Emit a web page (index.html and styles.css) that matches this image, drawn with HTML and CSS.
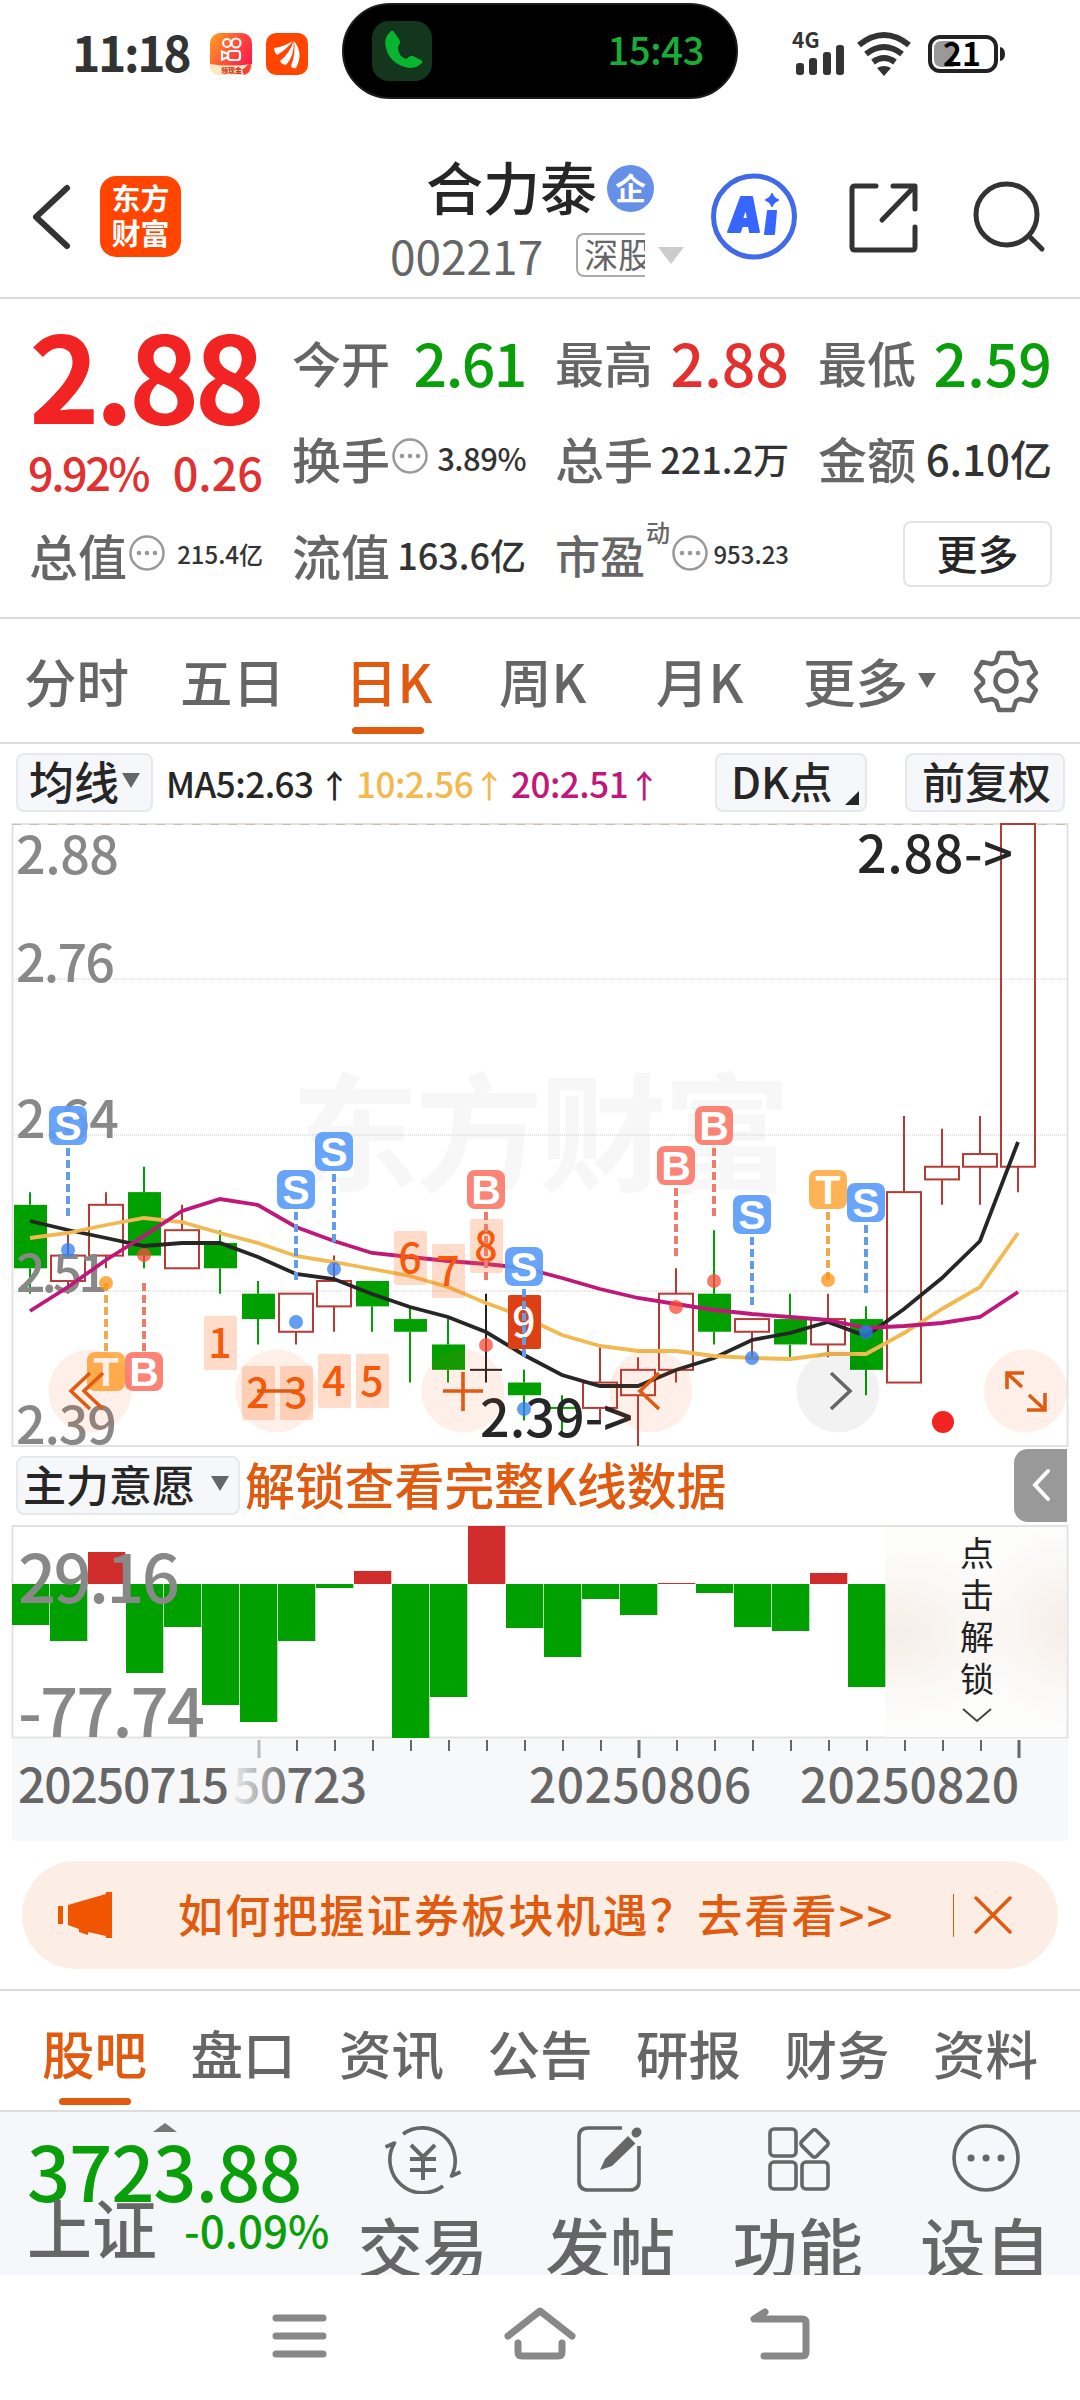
FILE: index.html
```html
<!DOCTYPE html>
<html lang="zh-CN">
<head>
  <meta charset="UTF-8" />
  <title>合力泰 002217</title>
  <link rel="stylesheet" href="styles.css">
</head>
<body>

<div class="status-bar">
  <span class="clock">11:18</span>
  <svg class="app-icon" viewBox="0 0 42 42">
    <defs>
      <linearGradient id="ks" x1="0" y1="0" x2="1" y2="0.6">
        <stop offset="0" stop-color="#ffa21f"/><stop offset="0.6" stop-color="#ff4a3a"/><stop offset="1" stop-color="#fb1f4a"/>
      </linearGradient>
    </defs>
    <rect width="42" height="42" rx="10" fill="url(#ks)"/>
    <g fill="none" stroke="#fff" stroke-width="2.2">
      <circle cx="17" cy="10" r="4"/><circle cx="26" cy="10" r="4.5"/>
      <rect x="18" y="18" width="12" height="9" rx="2.5"/>
      <path d="M12 18.500v8l6-2.500v-3z"/>
    </g>
    <path d="M0 31q20 3 42 0v1q0 10-10 10H10Q0 42 0 32z" fill="#ffe9c4"/>
    <text x="11" y="40" class="ks-text">领现金</text>
    <path d="M40 30l-8 7 2 5q7-2 7-10z" fill="#f5413c"/>
  </svg>
  <svg class="app-icon second" viewBox="0 0 42 42">
    <rect width="42" height="42" rx="10" fill="#ff4500"/>
    <path d="M8 15q9-1 19-7-7 9-16 14-3-3-3-7zM14 28Q24 20 27.500 8 29 22 20 32q-5-1-6-4zM25 33q5-13 3-25 10 12 2 27-4 1-5-2z" fill="#fff"/>
  </svg>
  <div class="island">
    <svg class="call-icon" viewBox="0 0 60 60">
      <rect width="60" height="60" rx="17" fill="#14361d"/>
      <path d="M19 10q-8 7-5 17 4 15 19 19 10 3 17-4 1-2-1-3l-8-4q-2-1-4 1l-3 2q-8-3-8-12l2-4q0-2-1-4l-5-7q-1-2-3-1z" fill="#08b52f"/>
    </svg>
    <span class="call-time">15:43</span>
  </div>
  <svg class="signal" viewBox="790 30 70 48">
    <text x="792" y="48" class="net-text">4G</text>
    <g fill="#333">
      <rect x="796" y="63" width="8" height="12" rx="3"/>
      <rect x="809" y="58" width="8" height="17" rx="3"/>
      <rect x="823" y="52" width="8" height="23" rx="3"/>
      <rect x="836" y="45" width="8" height="30" rx="3"/>
    </g>
  </svg>
  <svg class="wifi" viewBox="856 30 56 48">
    <g fill="none" stroke="#333" stroke-width="6">
      <path d="M859 45q25-20 50 0"/><path d="M866 54q18-14 36 0"/><path d="M873 62q11-8 22 0"/>
    </g>
    <path d="M877 68q7-4 14 0l-7 8z" fill="#333"/>
  </svg>
  <svg class="battery" viewBox="926 33 82 42">
    <rect x="930" y="37" width="66" height="34" rx="10" fill="#fff" stroke="#222" stroke-width="4"/>
    <path d="M942 41h12v26h-12q-8 0-8-8V49q0-8 8-8z" fill="#999"/>
    <path d="M1000 47q5 1 5 7t-5 7z" fill="#222"/>
    <text x="943" y="66" class="bat-text">21</text>
  </svg>
</div>

<div class="title-bar">
  <svg class="back" viewBox="0 0 44 70"><path d="M38 6L7 35l31 29" fill="none" stroke="#333" stroke-width="6" stroke-linecap="round" stroke-linejoin="round"/></svg>
  <div class="logo">东方<br>财富</div>
  <div class="stock">
    <div class="stock-name">合力泰<span class="badge">企</span></div>
    <div class="stock-code">002217<span class="market">深股</span><i class="caret"></i></div>
  </div>
  <svg class="ai" viewBox="711 174 87 87">
    <circle cx="754" cy="217.500" r="40.500" fill="none" stroke="#4169e8" stroke-width="5"/>
    <g fill="#3766ff" stroke="#3766ff" stroke-width="2" stroke-linejoin="round">
      <path d="M741 198h11l7 35h-9l-1-6h-7l-2 6h-12zM746 208l-4 12h6z" fill-rule="evenodd"/>
      <path d="M768 212h8l-2 23h-9zM772 195q2 5 6 6-5 2-6 6-2-5-6-6 5-2 6-6z"/>
    </g>
  </svg>
  <svg class="share" viewBox="847 180 74 74">
    <path d="M876 186h-21q-3 0-3 3v58q0 3 3 3h57q3 0 3-3v-20M893 186h22v23M914 187l-32 33" fill="none" stroke="#333" stroke-width="5" stroke-linecap="round" stroke-linejoin="round"/>
  </svg>
  <svg class="search" viewBox="972 180 74 74">
    <circle cx="1006.500" cy="214.500" r="30.500" fill="none" stroke="#333" stroke-width="5"/>
    <path d="M1029 236l13 13" stroke="#333" stroke-width="5" stroke-linecap="round"/>
  </svg>
</div>

<div class="quote">
  <div class="price-cell">
    <div class="price">2.88</div>
    <div class="change"><span class="pct">9.92%</span><span>0.26</span></div>
  </div>
  <div class="cell"><span>今开</span><b class="big green tight">2.61</b></div>
  <div class="cell"><span>最高</span><b class="big red">2.88</b></div>
  <div class="cell"><span>最低</span><b class="big green">2.59</b></div>
  <div class="cell"><span>换手</span><svg class="dots" viewBox="0 0 36 36"><use href="#more"/></svg><b class="s31">3.89%</b></div>
  <div class="cell"><span>总手</span><b class="s36">221.2万</b></div>
  <div class="cell"><span>金额</span><b class="s42">6.10亿</b></div>
  <div class="cell"><span>总值</span><svg class="dots" viewBox="0 0 36 36"><use href="#more"/></svg><b class="s24">215.4亿</b></div>
  <div class="cell"><span>流值</span><b class="s36">163.6亿</b></div>
  <div class="cell"><span class="narrow">市盈</span><sup>动</sup><svg class="dots" viewBox="0 0 36 36"><use href="#more"/></svg><b class="s24">953.23</b></div>
  <div class="cell last"><div class="more-btn">更多</div></div>
</div>

<div class="tabs">
  <span>分时</span>
  <span>五日</span>
  <span class="active">日K</span>
  <span>周K</span>
  <span>月K</span>
  <span class="tab-more">更多<i class="caret dark"></i></span>
  <svg class="gear" viewBox="0 0 64 64">
    <path d="M25 4h14l3 9 4 2 10-2 6 11-7 7v3l7 7-6 11-10-2-4 2-3 9H25l-3-9-4-2-10 2-6-11 7-7v-3l-7-7L8 13l10 2 4-2z" fill="none" stroke="#666" stroke-width="4.500" stroke-linejoin="round"/>
    <circle cx="32" cy="32" r="10.500" fill="none" stroke="#666" stroke-width="4.500"/>
  </svg>
</div>

<div class="ma-bar">
  <div class="chip ma-chip">均线<i class="caret dark"></i></div>
  <span class="ma ma5">MA5:2.63<i>↑</i></span>
  <span class="ma ma10">10:2.56<i>↑</i></span>
  <span class="ma ma20">20:2.51<i>↑</i></span>
  <div class="chip dk-chip">DK点<i class="corner"></i></div>
  <div class="chip fq-chip">前复权</div>
</div>

<svg id="kline" viewBox="0 822 1080 625"></svg>

<div class="intent-bar">
  <div class="chip intent-chip">主力意愿<i class="caret dark"></i></div>
  <span class="unlock">解锁查看完整K线数据</span>
  <div class="drawer"><svg viewBox="0 0 24 36"><path d="M19 4L6 18l13 14" fill="none" stroke="#fff" stroke-width="4" stroke-linecap="round"/></svg></div>
</div>

<svg id="intent" viewBox="0 1523 1080 317"></svg>

<div class="banner">
  <svg class="horn" viewBox="0 0 56 46"><path d="M0 14h5v18H0zM10 13L48 2V0h6v46h-6v-2l-18-4v3l-9-3v-3l-11-4z" fill="#f05500"/></svg>
  <span class="banner-text">如何把握证券板块机遇？去看看&gt;&gt;</span>
  <i class="bar"></i>
  <svg class="close" viewBox="0 0 40 38"><path d="M3 2l34 34M37 2L3 36" stroke="#e05a10" stroke-width="3.500" stroke-linecap="round"/></svg>
</div>

<div class="sections">
  <span class="active">股吧</span><span>盘口</span><span>资讯</span><span>公告</span><span>研报</span><span>财务</span><span>资料</span>
</div>

<div class="bottom-bar">
  <div class="index">
    <i class="up"></i>
    <div class="index-value">3723.88</div>
    <div class="index-row"><span>上证</span><b>-0.09%</b></div>
  </div>
  <div class="action">
    <svg viewBox="0 0 80 70">
      <path d="M20 10A33 33 0 0 1 68.500 52l9-4M60 62A33 33 0 0 1 11.500 19l-9 4"/>
      <path d="M28 21l12 12 12-12M27 35h26M27 46h26M40 33v23" stroke-width="4"/>
    </svg>
    <span>交易</span>
  </div>
  <div class="action">
    <svg viewBox="0 0 80 70">
      <path d="M52 4H18q-9 0-9 9v44q0 9 9 9h42q9 0 9-9V22"/>
      <path d="M30 46l5-11 24-24 8 7-25 24z" fill="#666" stroke="none"/>
      <path d="M66 9l1-1" stroke-width="9" stroke-linecap="round"/>
      <path d="M57 9l10 10" stroke="#f6f7fa" stroke-width="3"/>
    </svg>
    <span>发帖</span>
  </div>
  <div class="action">
    <svg viewBox="0 0 80 70">
      <rect x="12" y="5" width="26" height="27" rx="4"/>
      <rect x="12" y="38" width="26" height="27" rx="4"/>
      <rect x="44" y="38" width="26" height="27" rx="4"/>
      <rect x="46" y="9" width="21" height="21" rx="3" transform="rotate(45 56.500 19.500)"/>
    </svg>
    <span>功能</span>
  </div>
  <div class="action">
    <svg viewBox="0 0 80 70">
      <circle cx="41" cy="34" r="32"/>
      <path d="M26 34h.1M41 34h.1M56 34h.1" stroke-width="7" stroke-linecap="round"/>
    </svg>
    <span>设自</span>
  </div>
</div>

<div class="nav-bar">
  <svg viewBox="0 0 80 60"><path d="M16 15h47M16 33h47M16 51h47"/></svg>
  <svg viewBox="0 0 80 60"><path d="M8 33L40 8l32 25M18 40v9q0 4 4 4h36q4 0 4-4v-9"/></svg>
  <svg viewBox="0 0 80 60"><path d="M25 9L14 16h48q4 0 4 4v29q0 4-4 4H24"/></svg>
</div>

<svg class="defs">
  <g id="more">
    <circle cx="18" cy="18" r="16.500" fill="none" stroke="#999" stroke-width="2.500"/>
    <circle cx="10" cy="18" r="2.300" fill="#999"/><circle cx="18" cy="18" r="2.300" fill="#999"/><circle cx="26" cy="18" r="2.300" fill="#999"/>
  </g>
</svg>

<script>
  const STEP = 38;
  const FIRST = 30;
  const cx = i => FIRST + i * STEP;
  // prices are kept in cents, 288 sits on the top edge
  const py = p => 823 + (288 - p) * 12.694;

  // [color, high, body top, body bottom, low]
  const candles = [
    ["g", 259, 258, 253, 251], ["r", 256, 254, 252, 251], ["r", 259, 258, 254, 253],
    ["g", 261, 259, 254, 253], ["r", 258, 256, 253, 253], ["g", 256, 255, 253, 251],
    ["g", 252, 251, 249, 247], ["r", 251, 251, 248, 247], ["r", 254, 252, 250, 248],
    ["g", 252, 252, 250, 248], ["g", 250, 249, 248, 244], ["g", 249, 247, 245, 244],
    ["k", 251, 245, 245, 244], ["g", 245, 244, 243, 241], ["g", 243, 242, 242, 240],
    ["r", 247, 244, 242, 241], ["r", 246, 245, 243, 239], ["r", 253, 251, 245, 244],
    ["g", 256, 251, 248, 247], ["r", 249, 249, 248, 246], ["g", 251, 249, 247, 246],
    ["r", 251, 249, 247, 246], ["g", 250, 249, 245, 243], ["r", 265, 259, 244, 244],
    ["r", 264, 261, 260, 258], ["r", 265, 262, 261, 258], ["r", 288, 288, 261, 259]
  ];
  const colors = { r: "#b83a35", g: "#00a000", k: "#222" };

  const ma5 = [1220,1229,1237,1245,1242,1242,1256,1273,1278,1293,1306,1316,1331,1354,1374,1385,1385,1369,1357,1339,1332,1321,1335,1308,1277,1240,1141];
  const ma10 = [1237,1232,1224,1217,1221,1232,1242,1255,1261,1268,1275,1286,1302,1316,1334,1345,1350,1350,1355,1357,1358,1353,1353,1332,1308,1286,1232];
  const ma20 = [1310,1286,1259,1235,1210,1198,1204,1226,1240,1252,1256,1260,1263,1267,1277,1288,1297,1303,1309,1313,1316,1319,1327,1325,1322,1316,1291];

  // [candle, letter, badge center, dot center, badge below]
  const marks = [
    [1, "S", 1125, 1249], [7, "S", 1189, 1321], [8, "S", 1151, 1268], [12, "B", 1189, 1344],
    [13, "S", 1266, 1408], [17, "B", 1165, 1306], [18, "B", 1125, 1280], [19, "S", 1214, 1357],
    [21, "T", 1189, 1279], [22, "S", 1202, 1331], [2, "T", 1371, 1282, true], [3, "B", 1371, 1254, true]
  ];
  const markColor = { S: "#5b9dfa", B: "#fb7a6a", T: "#ffad45" };
  const dashColor = { S: "#629ee8", B: "#ec7c6c", T: "#f0a94c" };
  const dotColor = { S: "rgba(45,125,240,.75)", B: "rgba(250,75,55,.75)", T: "rgba(255,150,25,.78)" };

  // [candle, top]
  const counts = [[5, 1315], [6, 1365], [7, 1365], [8, 1353], [9, 1353], [10, 1230], [11, 1243], [12, 1218], [13, 1294]];

  function line(x1, y1, x2, y2, color, w, extra) {
    return `<line x1="${x1}" y1="${y1}" x2="${x2}" y2="${y2}" stroke="${color}" stroke-width="${w}" ${extra || ""}/>`;
  }

  function label(x, y, text, width, cls) {
    return `<text x="${x}" y="${y}" textLength="${width}" class="${cls}">${text}</text>`;
  }

  function poly(data, color) {
    const pts = data.map((y, i) => cx(i) + "," + y).join(" ");
    return `<polyline points="${pts}" fill="none" stroke="${color}" stroke-width="3.8"/>`;
  }

  function drawKline() {
    let s = `<text x="291" y="1181" textLength="500" class="watermark">东方财富</text>`;
    [978, 1134, 1290].forEach(y => s += line(12, y, 1067, y, "#ccc", 1, 'stroke-dasharray="1 1"'));
    s += `<rect x="12.500" y="823" width="1055" height="622" fill="none" stroke="#e2e2e2" stroke-width="2"/>`;
    s += line(12, 823.5, 1067, 823.5, "#d0bca0", 1, 'stroke-dasharray="9 9"');

    candles.forEach(([c, hi, top, bot, lo], i) => {
      const x = cx(i), col = colors[c];
      if (hi > top) s += line(x, py(hi), x, py(top), col, 2);
      if (lo < bot) s += line(x, py(bot), x, py(lo), col, 2);
      if (top === bot) s += line(x - 16, py(top), x + 16, py(top), col, 2);
      else if (c === "g") s += `<rect x="${x - 16}" y="${py(top)}" width="33" height="${py(bot) - py(top)}" fill="${col}"/>`;
      else s += `<rect x="${x - 17}" y="${py(top)}" width="34" height="${py(bot) - py(top)}" fill="none" stroke="${col}" stroke-width="2"/>`;
    });

    s += label(16, 873, "2.88", 103, "scale") + label(16, 981, "2.76", 99, "scale");
    s += label(16, 1137, "2.64", 103, "scale") + label(16, 1291, "2.51", 92, "scale") + label(16, 1443, "2.39", 101, "scale");
    s += poly(ma5, "#262626") + poly(ma10, "#f2b950") + poly(ma20, "#c01878");
    s += label(857, 872, "2.88-&gt;", 156, "peak");
    s += label(480, 1436, "2.39-&gt;", 153, "peak");

    counts.forEach(([i, y], n) => {
      const last = n === 8;
      s += `<rect x="${cx(i) - 16}" y="${y}" width="33" height="54" rx="2" fill="${last ? "#dd4014" : "rgba(255,110,40,.25)"}"/>`;
      s += `<text x="${cx(i)}" y="${y + 42}" class="count${last ? " count-last" : ""}">${n + 1}</text>`;
    });

    marks.forEach(([i, t, y, dot, below]) => {
      const x = cx(i);
      s += below ? line(x, 1282, x, 1350, dashColor[t], 4, 'stroke-dasharray="8 4"')
                 : line(x, y + 22, x, y + 90, dashColor[t], 4, 'stroke-dasharray="8 4"');
      s += `<circle cx="${x}" cy="${dot}" r="7" fill="${dotColor[t]}"/>`;
      s += `<rect x="${x - 19}" y="${y - 20}" width="38" height="39" rx="8" fill="${markColor[t]}" fill-opacity=".92"/>`;
      s += `<text x="${x}" y="${y + 14}" class="mark">${t}</text>`;
    });

    // chart controls
    [90, 276.5, 463, 651, 838, 1025.5].forEach((x, i) => {
      s += `<circle cx="${x}" cy="1390" r="41.500" fill="${i === 4 ? "rgba(0,0,0,.05)" : "rgba(240,90,10,.09)"}"/>`;
    });
    s += `<g fill="none" stroke="#e05a10" stroke-width="3.600">
      <path d="M90 1372l-19 18 19 18M103 1372l-19 18 19 18M257 1390h40M443 1390h40M463 1371v39M659 1372l-19 18 19 18"/>
      <path d="M1007 1388v-16h17M1008 1373l14 13M1027 1409h18v-17M1029 1394l15 14"/>
      <path d="M831 1372l19 18-19 18" stroke="#666"/></g>`;
    s += `<circle cx="943" cy="1421" r="11" fill="#f22323"/>`;
    document.getElementById("kline").innerHTML = s;
  }

  function drawIntent() {
    const base = 1583;
    const ends = [1624,1640,1551,1672,1626,1704,1721,1640,1587,1570,1737,1696,1525,1627,1656,1598,1614,1582,1592,1626,1630,1572,1686];
    let s = `<defs>
      <radialGradient id="lock"><stop offset="0" stop-color="#f6eee8"/><stop offset="1" stop-color="#f6eee8" stop-opacity="0"/></radialGradient>
      <linearGradient id="fade" gradientUnits="userSpaceOnUse" x1="232" y1="0" x2="292" y2="0"><stop offset="0" stop-color="#eee"/><stop offset="1" stop-color="#666"/></linearGradient>
      <clipPath id="lock-area"><rect x="885" y="1526" width="181" height="210"/></clipPath>
    </defs>`;
    s += `<rect x="12" y="1738" width="1056" height="102" fill="#f7f8fa"/>`;
    s += `<rect x="12.500" y="1525" width="1055" height="211.500" fill="#fff" stroke="#e2e2e2" stroke-width="2"/>`;
    // locked area
    s += `<g clip-path="url(#lock-area)"><rect x="885" y="1526" width="181" height="210" fill="#fdfdfc"/>
      <ellipse cx="900" cy="1632" rx="120" ry="90" fill="url(#lock)"/><ellipse cx="1066" cy="1625" rx="100" ry="100" fill="url(#lock)"/></g>`;
    ends.forEach((y, i) => {
      const x = i === 0 ? 12 : cx(i) - 18;
      s += `<rect x="${x}" y="${Math.min(y, base)}" width="37.300" height="${Math.abs(y - base)}" fill="${y < base ? "#d02c2c" : "#00a000"}"/>`;
    });
    s += label(18, 1602, "29.16", 162, "scale big-scale") + label(18, 1736, "-77.74", 187, "scale big-scale");
    "点击解锁".split("").forEach((ch, i) => s += `<text x="977" y="${1565 + i * 42}" class="lock-text">${ch}</text>`);
    s += `<path d="M963 1708l14 12 14-12" fill="none" stroke="#444" stroke-width="2"/>`;
    for (let i = 6; i < 27; i++) {
      const major = i % 10 === 6;
      s += line(cx(i) + 1, 1739, cx(i) + 1, major ? 1757 : 1750, i === 6 ? "#bbb" : "#666", major ? 3 : 2);
    }
    s += label(18, 1802, "20250715", 211, "date") + `<text x="233" y="1802" textLength="134" class="date" style="fill:url(#fade)">50723</text>`;
    s += label(529, 1802, "20250806", 222, "date") + label(800, 1802, "20250820", 219, "date");
    document.getElementById("intent").innerHTML = s;
  }

  drawKline();
  drawIntent();
</script>

</body>
</html>
```
FILE: styles.css
```css
* {
  box-sizing: border-box;
}

body {
  margin: 0;
  width: 1080px;
  height: 2400px;
  overflow: hidden;
  background: #fff;
  color: #262626;
  font-family: "Noto Sans CJK SC", "Noto Sans", sans-serif;
  font-weight: 500;
  line-height: 1;
}

i {
  font-style: normal;
}

svg {
  display: block;
  flex: none;
}

.defs {
  width: 0;
  height: 0;
}

.caret {
  width: 0;
  height: 0;
  border-left: 13px solid transparent;
  border-right: 13px solid transparent;
  border-top: 17px solid #ccc;
}

.caret.dark {
  border-left-width: 9px;
  border-right-width: 9px;
  border-top: 15px solid #666;
}

/* status bar */
.status-bar {
  display: flex;
  align-items: center;
  height: 108px;
  padding-left: 72px;
}

.clock {
  width: 138px;
  margin-top: -7px;
  font-size: 48px;
  font-weight: 700;
  letter-spacing: -2.3px;
  color: #333;
}

.app-icon {
  width: 42px;
  height: 42px;
}

.second {
  margin-left: 14px;
}

.ks-text {
  font-size: 7px;
  font-weight: 900;
  fill: #d8361f;
}

.island {
  display: flex;
  align-items: center;
  justify-content: space-between;
  width: 396px;
  height: 96px;
  margin: -6px 0 0 34px;
  padding: 0 32px 0 28px;
  border-radius: 48px;
  background: #000;
  border: 2px solid #1c1c1c;
}

.call-icon {
  width: 60px;
  height: 60px;
}

.call-time {
  margin-top: -5px;
  font-size: 38px;
  letter-spacing: -0.3px;
  color: #18ad37;
}

.signal {
  width: 70px;
  height: 48px;
  margin-left: 52px;
}

.net-text {
  font-size: 21px;
  font-weight: 700;
  fill: #333;
}

.wifi {
  width: 56px;
  height: 48px;
  margin-left: -4px;
}

.battery {
  width: 82px;
  height: 42px;
  margin-left: 14px;
}

.bat-text {
  font-size: 32px;
  font-weight: 700;
  fill: #000;
}

/* title bar */
.title-bar {
  display: flex;
  align-items: center;
  height: 191px;
  padding: 28px 0 0 29px;
  border-bottom: 2px solid #dcdcdc;
}

.back {
  width: 44px;
  height: 70px;
}

.logo {
  width: 81px;
  height: 81px;
  margin-left: 27px;
  padding-top: 4px;
  border-radius: 16px;
  background: #ff4500;
  color: #fff;
  font-size: 29px;
  font-weight: 700;
  line-height: 35px;
  text-align: center;
}

.stock {
  width: 530px;
  padding-left: 209px;
}

.stock-name {
  display: flex;
  align-items: center;
  height: 56px;
  margin: 0 0 0 36px;
  padding-bottom: 3px;
  font-size: 57px;
}

.badge {
  width: 47px;
  height: 47px;
  margin: 5px 0 0 10px;
  border-radius: 50%;
  background: #6690e8;
  color: #fff;
  font-size: 31px;
  font-weight: 700;
  line-height: 43px;
  text-align: center;
}

.stock-code {
  display: flex;
  align-items: center;
  height: 45px;
  margin-top: 14px;
  padding-top: 7px;
  font-size: 46px;
  font-weight: 400;
  color: #666;
}

.market {
  width: 69px;
  height: 44px;
  margin-left: 33px;
  padding-left: 6px;
  overflow: hidden;
  border: 2px solid #aaa;
  border-right: 0;
  border-radius: 8px 0 0 8px;
  font-size: 34px;
  line-height: 37px;
  white-space: nowrap;
}

.stock-code .caret {
  margin-left: 13px;
}

.ai {
  width: 87px;
  height: 87px;
}

.share {
  width: 74px;
  height: 74px;
  margin-left: 49px;
}

.search {
  width: 74px;
  height: 74px;
  margin-left: 51px;
}

/* quote grid */
.quote {
  display: grid;
  grid-template-columns: repeat(4, 234px);
  grid-template-rows: repeat(3, 96.5px);
  column-gap: 29px;
  height: 320px;
  padding: 14px 0 0 29px;
  border-bottom: 2px solid #dcdcdc;
}

.price-cell {
  grid-row: span 2;
}

.price {
  height: 121px;
  margin-top: -1px;
  font-size: 120px;
  font-weight: 700;
  color: #f22323;
  letter-spacing: -5px;
}

.change {
  display: flex;
  justify-content: space-between;
  margin: 16px 0 0 -1px;
  font-size: 45px;
  color: #e03030;
}

.pct {
  letter-spacing: -2.5px;
}

.cell {
  display: flex;
  align-items: center;
  font-size: 49px;
  color: #666;
  white-space: nowrap;
}

.cell b {
  margin-left: auto;
  font-weight: 500;
  color: #333;
}

.cell .big { font-size: 59px; }
.cell b.red { color: #e53030; }
.cell b.green { color: #0a9f0a; }
.cell .tight { letter-spacing: -1.5px; }
.cell .s24 { font-size: 24px; }
.cell .s31 { font-size: 31px; letter-spacing: -0.5px; }
.cell .s36 { font-size: 36px; }
.cell .s42 { font-size: 42px; }

.cell .narrow {
  font-size: 45px;
}

.cell sup {
  align-self: flex-start;
  margin: 14px 3px 0 1px;
  font-size: 24px;
}

.dots {
  width: 36px;
  height: 36px;
  margin: -3px 0 0 2px;
}

.cell sup + .dots {
  margin-left: -1px;
}

.last {
  justify-content: flex-end;
}

.more-btn {
  width: 149px;
  height: 66px;
  border: 2px solid #e4e4e4;
  border-radius: 8px;
  color: #262626;
  font-size: 41px;
  line-height: 58px;
  text-align: center;
}

/* period tabs */
.tabs {
  display: grid;
  grid-template-columns: 156px 165px 154px 157px 147px 171px 64px;
  align-items: center;
  height: 125px;
  padding: 0 0 0 24px;
  border-bottom: 2px solid #dcdcdc;
  font-size: 52.5px;
  color: #666;
}

.tabs .active,
.sections .active {
  position: relative;
  color: #e05a10;
}

.tabs .active::after,
.sections .active::after {
  content: "";
  position: absolute;
  left: 7px;
  bottom: -27px;
  width: 72px;
  height: 7px;
  border-radius: 4px;
  background: #e05a10;
}

.tab-more {
  display: flex;
  align-items: center;
}

.tab-more .caret {
  margin-left: 10px;
}

.gear {
  width: 64px;
  height: 64px;
}

/* moving average row */
.ma-bar {
  display: flex;
  align-items: center;
  height: 79px;
  padding: 0 0 2px 16px;
}

.chip {
  display: flex;
  align-items: center;
  position: relative;
  height: 59px;
  padding-bottom: 4px;
  border: 2px solid #e6e8ec;
  border-radius: 8px;
  background: #f6f7fa;
  font-size: 43px;
  white-space: nowrap;
}

.ma-chip {
  width: 137px;
  padding-left: 11px;
  font-size: 45px;
}

.ma-chip .caret {
  margin-left: 3px;
}

.ma {
  font-size: 35px;
  letter-spacing: -0.5px;
  white-space: nowrap;
}

.ma i {
  display: inline-block;
  width: 24px;
  font-size: 32px;
  text-indent: 0;
}

.ma5 { width: 190px; margin-left: 13px; }
.ma5 i { text-indent: 5px; }
.ma10 { width: 155px; color: #f2b950; }
.ma20 { width: 204px; color: #c01878; }

.dk-chip {
  width: 152px;
  padding-left: 14px;
}

.corner {
  position: absolute;
  right: 6px;
  bottom: 5px;
  border-left: 14px solid transparent;
  border-bottom: 14px solid #262626;
}

.fq-chip {
  width: 160px;
  margin-left: 38px;
  padding-left: 15px;
}

/* charts */
#kline {
  width: 1080px;
  height: 625px;
}

#intent {
  width: 1080px;
  height: 317px;
}

.scale {
  font-size: 52px;
  fill: #888;
}

.big-scale {
  font-size: 67px;
}

.peak {
  font-size: 52px;
  fill: #262626;
}

.watermark {
  font-size: 128px;
  font-weight: 700;
  fill: #f7f7f7;
}

.count {
  font-size: 41px;
  fill: #f5590a;
  text-anchor: middle;
}

.count-last {
  fill: #fff;
}

.mark {
  font-family: "Liberation Sans", sans-serif;
  font-size: 41px;
  font-weight: 700;
  fill: #fff;
  text-anchor: middle;
}

.lock-text {
  font-size: 34px;
  font-weight: 400;
  fill: #222;
  text-anchor: middle;
}

.date {
  font-size: 48px;
  fill: #666;
}

/* main intent row */
.intent-bar {
  display: flex;
  align-items: center;
  height: 76px;
  padding: 0 0 2px 16px;
}

.intent-chip {
  width: 224px;
  padding-left: 5px;
}

.intent-chip .caret {
  margin-left: 16px;
}

.unlock {
  flex: 1;
  margin: -4px 0 0 5px;
  font-size: 50px;
  letter-spacing: -0.2px;
  color: #e05a10;
}

.drawer {
  display: flex;
  align-items: center;
  justify-content: center;
  width: 53px;
  height: 73px;
  margin-right: 13px;
  border-radius: 14px 0 0 14px;
  background: #999;
}

.drawer svg {
  width: 24px;
  height: 36px;
}

/* banner */
.banner {
  display: flex;
  align-items: center;
  width: 1036px;
  height: 108px;
  margin: 20px 22px;
  padding-left: 36px;
  border-radius: 54px;
  background: #fceee5;
}

.horn {
  width: 56px;
  height: 48px;
}

.banner-text {
  width: 775px;
  margin: -4px 0 0 64px;
  font-size: 45px;
  letter-spacing: 2.2px;
  white-space: nowrap;
  color: #e05a10;
}

.bar {
  width: 1px;
  height: 43px;
  background: #e05a10;
}

.close {
  width: 40px;
  height: 38px;
  margin-left: 19px;
}

/* info sections */
.sections {
  display: grid;
  grid-template-columns: repeat(7, 148.5px);
  align-items: center;
  height: 123px;
  padding: 4px 0 0 42px;
  border-top: 2px solid #dcdcdc;
  border-bottom: 2px solid #dcdcdc;
  font-size: 52.5px;
  color: #666;
}

.sections .active::after {
  left: 17px;
  bottom: -26px;
}

/* bottom bar */
.bottom-bar {
  display: flex;
  height: 163px;
  overflow: hidden;
  background: #f6f7fa;
}

.index {
  width: 329px;
  padding: 11px 0 0 27px;
  white-space: nowrap;
}

.up {
  display: block;
  width: 0;
  height: 0;
  margin-left: 126px;
  border-left: 12px solid transparent;
  border-right: 12px solid transparent;
  border-bottom: 9px solid #777;
}

.index-value {
  margin-top: 4px;
  font-size: 76px;
  line-height: 66px;
  color: #0a9f0a;
  letter-spacing: -1.2px;
}

.index-row {
  display: flex;
  align-items: center;
  margin-top: -8px;
  font-size: 65px;
  color: #666;
}

.index-row b {
  margin: 4px 0 0 27px;
  font-size: 44px;
  font-weight: 500;
  color: #0a9f0a;
}

.action {
  display: flex;
  flex-direction: column;
  align-items: center;
  width: 187.5px;
  padding-top: 12px;
  font-size: 65px;
  color: #666;
}

.action svg {
  width: 80px;
  height: 70px;
  fill: none;
  stroke: #666;
  stroke-width: 3.6;
  stroke-linejoin: round;
}

.action span {
  margin-top: 19px;
  white-space: nowrap;
}

/* system nav */
.nav-bar {
  display: flex;
  justify-content: center;
  gap: 160px;
  height: 126px;
  padding-top: 28px;
}

.nav-bar svg {
  width: 80px;
  height: 60px;
  fill: none;
  stroke: #888;
  stroke-width: 7;
  stroke-linecap: round;
  stroke-linejoin: round;
}
```
